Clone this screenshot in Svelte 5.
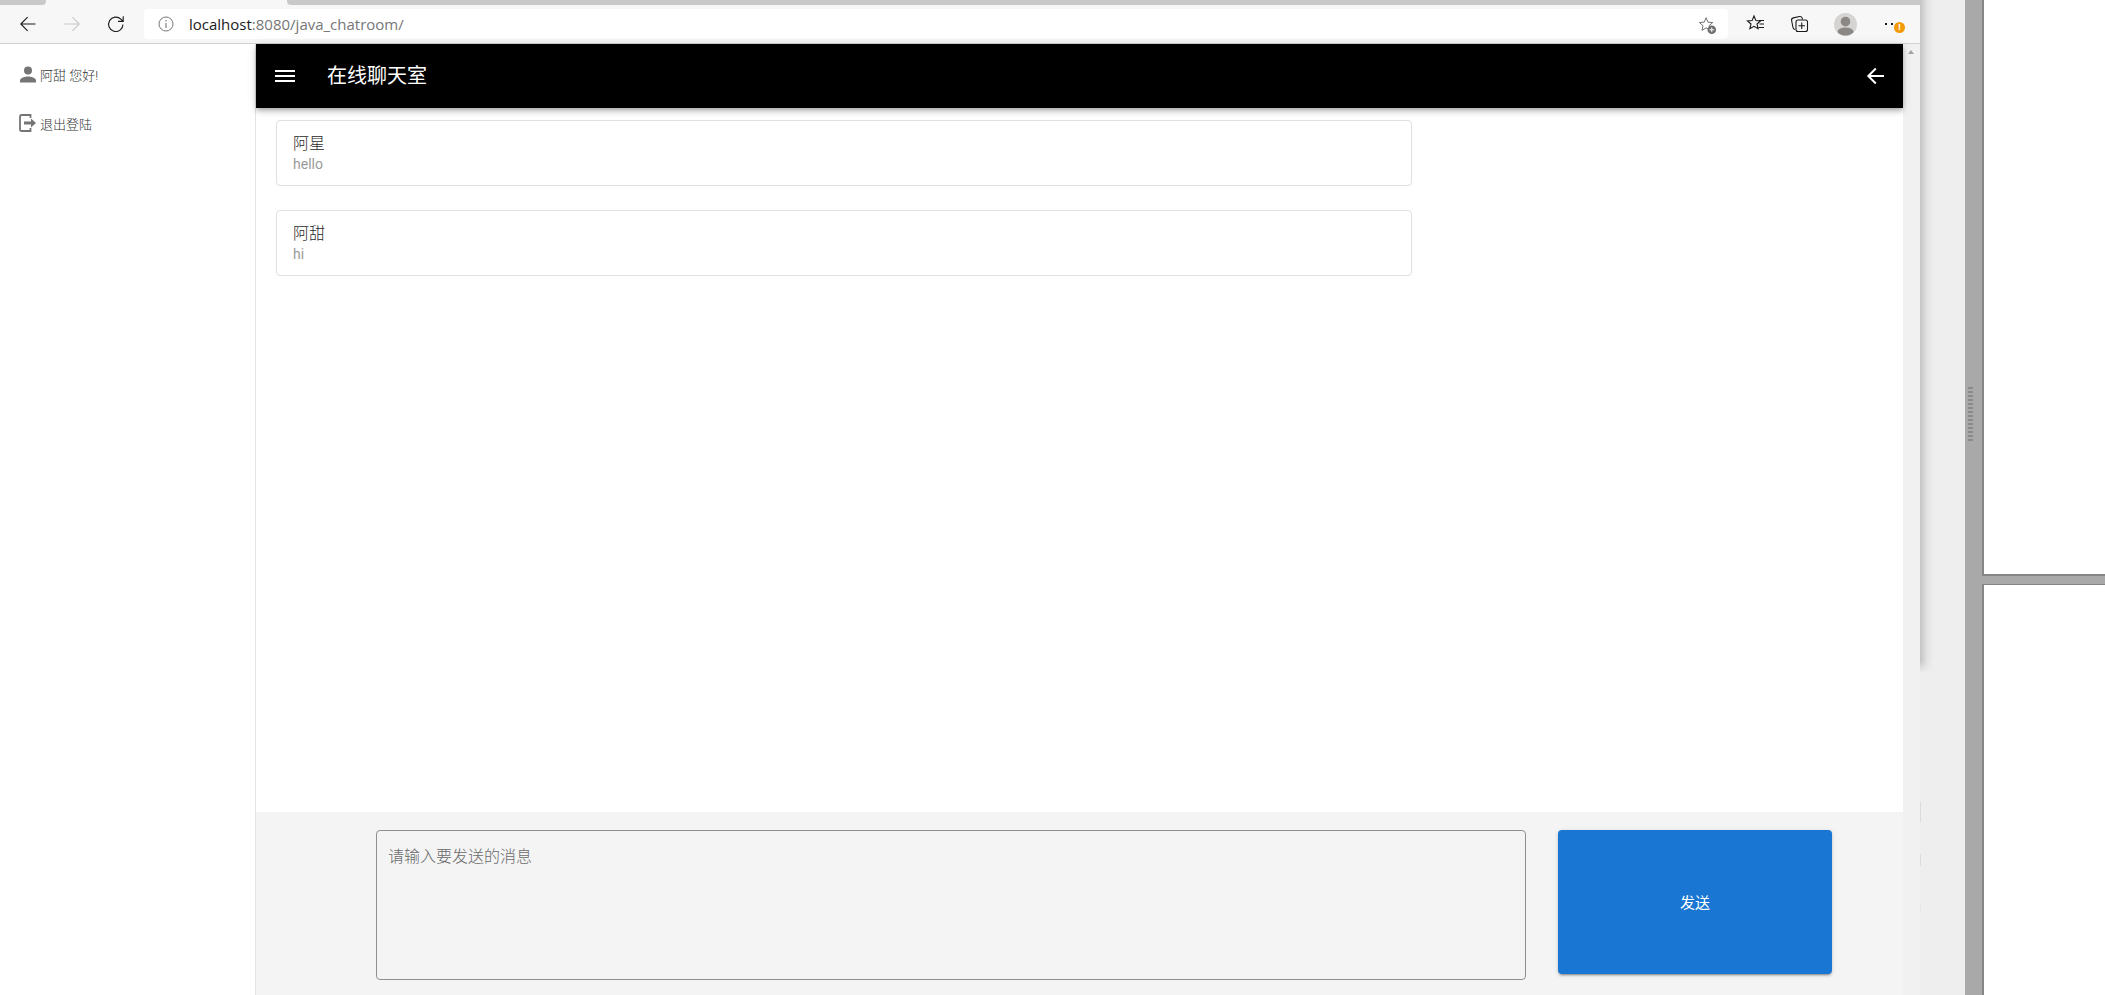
<script>
  const messages = [
    { name: '阿星', text: 'hello' },
    { name: '阿甜', text: 'hi' }
  ];
</script>

<div class="screen">
  <div class="browser">
    <div class="tabstrip">
      <div class="tab-off first"></div>
      <div class="tab-on"></div>
      <div class="tab-off rest"></div>
    </div>
    <div class="toolbar">
      <div class="nav">
        <svg class="nav-ico" viewBox="0 0 18 18"><path d="M16.500 9H1.800M8.600 2.200L1.800 9l6.800 6.800" fill="none" stroke="#1a1a1a" stroke-width="1.100"/></svg>
        <svg class="nav-ico" viewBox="0 0 18 18"><path d="M1.500 9h14.700M9.400 2.200L16.200 9l-6.800 6.800" fill="none" stroke="#c8c8c8" stroke-width="1.100"/></svg>
        <svg class="nav-ico" viewBox="0 0 18 18"><path d="M16 9.500a7.200 7.200 0 1 1-2.100-5.300l2 2M16.200 1.200v5.200H11" fill="none" stroke="#1a1a1a" stroke-width="1.100"/></svg>
      </div>
      <div class="omnibox">
        <svg class="info" viewBox="0 0 16 16"><circle cx="8" cy="8" r="7" fill="none" stroke="#767676" stroke-width="1"/><path d="M8 7v5M8 4v1.400" stroke="#767676" stroke-width="1.100"/></svg>
        <span class="url"><span class="host">localhost</span>:8080/java_chatroom/</span>
        <svg class="star-add" viewBox="0 0 20 20"><path d="M8.500 1.800l2 4.700 5 .4-3.800 3.300 1.100 4.900-4.300-2.600-4.300 2.600 1.100-4.900L1.500 6.900l5-.4z" fill="none" stroke="#6a6a6a" stroke-width="1"/><circle cx="14.500" cy="14.500" r="4.500" fill="#6d6d6d"/><path d="M14.500 12v5M12 14.500h5" stroke="#fff" stroke-width="1"/></svg>
      </div>
      <div class="tools">
        <svg class="tool" viewBox="0 0 20 20"><path d="M8 2l1.900 4.600 4.600.4-3.500 3 1.100 4.700L8 12.300l-4.100 2.400L5 10 1.500 7l4.600-.4z" fill="none" stroke="#1a1a1a" stroke-width="1.100"/><path d="M13 6.500h5M13.500 10h4.500M12.500 13.500h5.500" stroke="#1a1a1a" stroke-width="1"/></svg>
        <svg class="tool" viewBox="0 0 20 20"><path d="M5 15.500c-1.200-.2-1.800-1-2-2L1.600 6.500c-.2-1.400.4-2.300 1.700-2.600L9.500 2.500c1.300-.2 2.300.4 2.700 1.700l.3 1.300" fill="none" stroke="#1a1a1a" stroke-width="1.100"/><rect x="6" y="6" width="11.500" height="11.500" rx="2" fill="#f7f7f7" stroke="#1a1a1a" stroke-width="1.100"/><path d="M11.750 8.500v6.500M8.500 11.750H15" stroke="#1a1a1a" stroke-width="1.100"/></svg>
        <svg class="avatar" viewBox="0 0 24 24"><circle cx="12" cy="12" r="12" fill="#d6d4d2"/><clipPath id="avatar-clip"><circle cx="12" cy="12" r="11.500"/></clipPath><circle cx="12" cy="9" r="5" fill="#8b8785"/><ellipse cx="12" cy="20" rx="8.500" ry="5" fill="#8b8785" clip-path="url(#avatar-clip)"/></svg>
        <div class="more">
          <span class="dots"><i></i><i></i><i></i></span>
          <span class="badge">!</span>
        </div>
      </div>
    </div>
    <div class="page">
      <aside class="sidebar">
        <div class="side-row user">
          <svg class="person" viewBox="0 0 18 18"><circle cx="9" cy="4.600" r="4" fill="#757575"/><path d="M1 16.500v-2c0-2.700 5.300-4 8-4s8 1.300 8 4v2z" fill="#757575"/></svg>
          <span>阿甜 您好!</span>
        </div>
        <div class="side-row logout">
          <svg class="exit" viewBox="0 0 18 20"><path d="M11.500 5V2H2.800C1.800 2 1 2.800 1 3.800v12.400c0 1 .8 1.800 1.800 1.800h8.700v-3" fill="none" stroke="#757575" stroke-width="1.800"/><path d="M5 8.600h7V5.600l5 4.400-5 4.400v-3H5z" fill="#757575"/></svg>
          <span>退出登陆</span>
        </div>
      </aside>
      <main class="main">
        <header class="appbar">
          <svg class="burger" viewBox="0 0 20 14"><path d="M0 2h20M0 7h20M0 12h20" stroke="#fff" stroke-width="2"/></svg>
          <h1>在线聊天室</h1>
          <svg class="back" viewBox="0 0 18 18"><path d="M18 9H2.500M9.800 1.500L2.300 9l7.500 7.500" fill="none" stroke="#fff" stroke-width="2"/></svg>
        </header>
        <section class="messages">
          {#each messages as m}
            <article class="card">
              <div class="name">{m.name}</div>
              <div class="text">{m.text}</div>
            </article>
          {/each}
        </section>
        <footer class="composer">
          <textarea class="input" placeholder="请输入要发送的消息"></textarea>
          <button class="send"><span class="send-label">发送</span></button>
        </footer>
      </main>
      <div class="scrollbar"><span class="arrow"></span></div>
    </div>
  </div>
  <div class="gutter">
    <div class="shadow"></div>
    <div class="faint">
      <i class="f1"></i><i class="f2"></i><i class="f3"></i>
    </div>
  </div>
  <div class="splitter">
    <div class="grip"></div>
  </div>
  <div class="panes">
    <div class="pane top"></div>
    <div class="divider"></div>
    <div class="pane bottom"></div>
  </div>
</div>

<style>
  :global(body) {
    margin: 0;
    overflow: hidden;
    background: #eeeeee;
  }

  * {
    box-sizing: border-box;
  }

  .screen {
    display: flex;
    width: 2105px;
    height: 995px;
    overflow: hidden;
    font-family: Roboto, "Noto Sans CJK SC", sans-serif;
  }

  .browser {
    display: flex;
    flex-direction: column;
    flex: none;
    width: 1920px;
    height: 995px;
    background: #fff;
  }

  .tabstrip {
    display: flex;
    flex: none;
    height: 5px;
    background: #f7f7f7;
  }

  .tab-off {
    background: #c9c9c9;
  }

  .first {
    width: 46px;
    border-bottom-right-radius: 4px;
  }

  .tab-on {
    width: 241px;
  }

  .rest {
    flex: 1;
    border-bottom-left-radius: 4px;
  }

  .toolbar {
    display: flex;
    align-items: center;
    flex: none;
    height: 39px;
    background: #f7f7f7;
    border-bottom: 1px solid #d2d2d2;
  }

  .nav {
    display: flex;
    align-items: center;
    gap: 26px;
    width: 144px;
    padding-left: 19px;
  }

  .nav-ico {
    width: 18px;
    height: 18px;
  }

  .omnibox {
    display: flex;
    align-items: center;
    width: 1584px;
    height: 30px;
    padding: 0 11px 0 14px;
    background: #fff;
    border-radius: 4px;
  }

  .info {
    width: 16px;
    height: 16px;
  }

  .url {
    flex: 1;
    margin-left: 15px;
    font: 15px "Open Sans", sans-serif;
    color: #767676;
  }

  .host {
    color: #1a1a1a;
  }

  .star-add {
    width: 19px;
    height: 19px;
    margin-top: 2px;
  }

  .tools {
    display: flex;
    align-items: center;
    flex: 1;
    padding-left: 18px;
  }

  .tool {
    width: 20px;
    height: 20px;
    margin-right: 24px;
  }

  .avatar {
    width: 23px;
    height: 23px;
    margin-right: 28px;
  }

  .more {
    position: relative;
    width: 22px;
    height: 20px;
  }

  .dots {
    display: flex;
    gap: 3.500px;
    margin-top: 9px;
  }

  .dots i {
    width: 2px;
    height: 2px;
    background: #1a1a1a;
  }

  .badge {
    position: absolute;
    left: 9px;
    top: 8px;
    width: 11px;
    height: 11px;
    border-radius: 50%;
    background: #f29a0a;
    color: #fff;
    font: 700 9px/11px "Liberation Sans", sans-serif;
    text-align: center;
  }

  .page {
    display: flex;
    flex: 1;
    min-height: 0;
  }

  .sidebar {
    flex: none;
    width: 256px;
    padding: 21px 0 0 19px;
    border-right: 1px solid #e3e3e3;
    font-size: 13px;
    font-weight: 300;
    color: #333;
  }

  .side-row {
    display: flex;
    align-items: center;
    gap: 3px;
  }

  .logout {
    margin-top: 29px;
  }

  .person {
    width: 18px;
    height: 18px;
  }

  .exit {
    width: 18px;
    height: 20px;
  }

  .main {
    display: flex;
    flex-direction: column;
    flex: 1;
    min-width: 0;
  }

  .appbar {
    display: flex;
    align-items: center;
    flex: none;
    height: 64px;
    padding: 0 19px;
    background: #000;
    color: #fff;
    box-shadow: 0 2px 4px -1px rgba(0, 0, 0, .2), 0 4px 5px 0 rgba(0, 0, 0, .14), 0 1px 10px 0 rgba(0, 0, 0, .12);
    position: relative;
  }

  .burger {
    width: 20px;
    height: 14px;
  }

  h1 {
    flex: 1;
    margin: 0 0 4px 32px;
    font-size: 20px;
    font-weight: 400;
  }

  .back {
    width: 18px;
    height: 18px;
  }

  .messages {
    display: flex;
    flex-direction: column;
    gap: 24px;
    flex: 1;
    padding: 12px 0 0 20px;
  }

  .card {
    display: flex;
    flex-direction: column;
    justify-content: center;
    width: 1136px;
    height: 66px;
    padding: 0 16px;
    border: 1px solid #e0e0e0;
    border-radius: 4px;
  }

  .name {
    font-size: 16px;
    font-weight: 300;
    line-height: 22px;
    color: #2a2a2a;
  }

  .text {
    font-size: 14px;
    line-height: 18px;
    color: #9a9a9a;
  }

  .composer {
    display: flex;
    flex: none;
    height: 183px;
    padding: 18px 0 0 120px;
    background: #f4f4f4;
  }

  .input {
    display: block;
    width: 1150px;
    height: 150px;
    padding: 14px 11px;
    resize: none;
    background: #f4f4f4;
    border: 1px solid #8f8f8f;
    border-radius: 4px;
    outline: none;
    font: 300 16px/24px Roboto, "Noto Sans CJK SC", sans-serif;
  }

  .input::placeholder {
    color: #6a6a6a;
    opacity: 1;
  }

  .send {
    width: 274px;
    height: 144px;
    margin-left: 32px;
    padding: 0 0 2px;
    background: #1976d2;
    color: #fff;
    border: 0;
    border-radius: 4px;
    font: 15px Roboto, "Noto Sans CJK SC", sans-serif;
    box-shadow: 0 3px 1px -2px rgba(0, 0, 0, .2), 0 2px 2px 0 rgba(0, 0, 0, .14), 0 1px 5px 0 rgba(0, 0, 0, .12);
  }

  .scrollbar {
    flex: none;
    width: 17px;
    padding: 6px 0 0 5px;
    background: #f1f1f1;
  }

  .arrow {
    display: block;
    width: 0;
    height: 0;
    border: 3.500px solid transparent;
    border-top: 0;
    border-bottom: 4px solid #a3a3a3;
  }

  .gutter {
    position: relative;
    flex: none;
    width: 45px;
    background: #eeeeee;
  }

  .shadow {
    height: 673px;
    width: 14px;
    background: linear-gradient(to right, #c4c4c4, #e2e2e2 50%, #eeeeee);
    -webkit-mask-image: linear-gradient(to bottom, #000 calc(100% - 12px), transparent);
    mask-image: linear-gradient(to bottom, #000 calc(100% - 12px), transparent);
  }

  .faint {
    position: absolute;
    left: 0;
    top: 800px;
  }

  .faint i {
    position: absolute;
    left: 0;
    width: 1px;
    background: #dcdcdc;
  }

  .f1 {
    top: 2px;
    height: 20px;
  }

  .f2 {
    top: 54px;
    height: 12px;
  }

  .f3 {
    top: 105px;
    height: 8px;
    opacity: .5;
  }

  .splitter {
    flex: none;
    width: 19px;
    padding: 387px 0 0 3px;
    background: #a9a9a9;
    border-right: 2px solid #858585;
  }

  .grip {
    width: 5px;
    height: 55px;
    background: repeating-linear-gradient(to bottom, #8a8a8a 0 2px, transparent 2px 4px);
  }

  .panes {
    display: flex;
    flex-direction: column;
    flex: 1;
  }

  .pane {
    background: #fff;
  }

  .top {
    height: 574px;
  }

  .divider {
    flex: none;
    height: 11px;
    margin-left: -2px;
    background: #a9a9a9;
    border-top: 2px solid #858585;
    border-bottom: 1px solid #858585;
  }

  .bottom {
    flex: 1;
  }
</style>
